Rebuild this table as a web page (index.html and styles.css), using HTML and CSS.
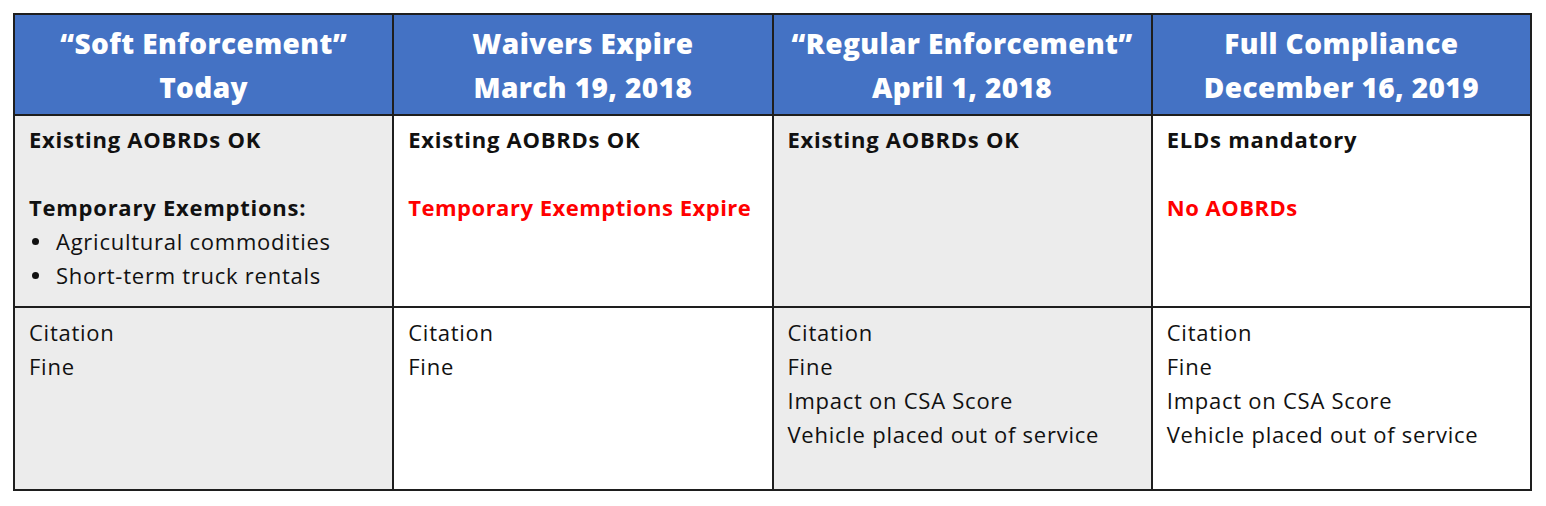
FILE: index.html
```html
<!DOCTYPE html>
<html>
<head>
<meta charset="utf-8">
<link rel="stylesheet" href="styles.css">
</head>
<body>
<table class="grid">
  <colgroup><col class="c"><col class="c"><col class="c"><col class="c"></colgroup>
  <thead>
    <tr class="head">
      <th>“Soft Enforcement”<br>Today</th>
      <th>Waivers Expire<br>March 19, 2018</th>
      <th>“Regular Enforcement”<br>April 1, 2018</th>
      <th>Full Compliance<br>December 16, 2019</th>
    </tr>
  </thead>
  <tbody>
    <tr class="status">
      <td class="shade">
        <div class="b">Existing AOBRDs OK</div>
        <div class="gap"></div>
        <div class="b">Temporary Exemptions:</div>
        <ul class="bul">
          <li>Agricultural commodities</li>
          <li>Short-term truck rentals</li>
        </ul>
      </td>
      <td>
        <div class="b">Existing AOBRDs OK</div>
        <div class="gap"></div>
        <div class="b red">Temporary Exemptions Expire</div>
      </td>
      <td class="shade">
        <div class="b">Existing AOBRDs OK</div>
      </td>
      <td>
        <div class="b">ELDs mandatory</div>
        <div class="gap"></div>
        <div class="b red">No AOBRDs</div>
      </td>
    </tr>
    <tr class="penalty">
      <td class="shade"><div>Citation</div><div>Fine</div></td>
      <td><div>Citation</div><div>Fine</div></td>
      <td class="shade"><div>Citation</div><div>Fine</div><div>Impact on CSA Score</div><div>Vehicle placed out of service</div></td>
      <td><div>Citation</div><div>Fine</div><div>Impact on CSA Score</div><div>Vehicle placed out of service</div></td>
    </tr>
  </tbody>
</table>
</body>
</html>
```
FILE: styles.css
```css
html, body { margin: 0; padding: 0; background: #fff; }
body { padding: 13px 0 0 13px; font-family: "Open Sans", "Liberation Sans", sans-serif; color: #111; }
.grid {
  border-collapse: collapse;
  width: 1519px;
  table-layout: fixed;
  font-size: 22px;
  letter-spacing: 0.75px;
  line-height: 34px;
}
.c { width: 25%; }
.grid th, .grid td {
  border: 2px solid #1e1e1e;
  vertical-align: top;
  text-align: left;
}
.head th {
  background: #4472c4;
  color: #fff;
  font-size: 28px;
  letter-spacing: 0.4px;
  line-height: 44px;
  font-weight: 800;
  text-align: center;
  height: 99px;
  vertical-align: middle;
  padding: 0;
}
.status td { height: 192px; padding: 6px 4px 0 14px; box-sizing: border-box; }
.penalty td { height: 183px; padding: 7px 4px 0 14px; box-sizing: border-box; }
.shade { background: #ececec; }
.b { font-weight: 700; white-space: nowrap; }
.red { color: #ff0000; letter-spacing: 0.5px; }
.gap { height: 34px; }
.bul { margin: 0; padding: 0; list-style: none; }
.bul li { position: relative; padding-left: 27px; }
.bul li::before {
  content: "";
  position: absolute;
  left: 3px; top: 14px;
  width: 7px; height: 7px;
  border-radius: 50%;
  background: #111;
}
```
